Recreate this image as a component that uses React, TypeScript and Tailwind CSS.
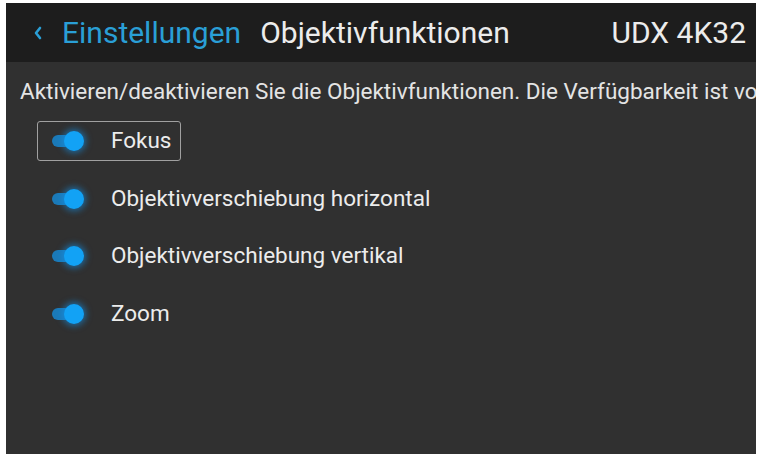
import React from 'react';

interface ToggleRowProps {
  label: string;
  focused?: boolean;
}

const Toggle: React.FC = () => (
  <div className="relative h-[22px] w-[36px]">
    <div className="absolute left-[2px] top-[5px] h-[12px] w-[28px] rounded-full bg-[#1b7ab8]" />
    <div className="absolute left-[14px] top-[1px] h-[20px] w-[20px] rounded-full bg-[#12a2f5] shadow-[0_0_6px_2px_rgba(18,150,240,0.55)]" />
  </div>
);

const ToggleRow: React.FC<ToggleRowProps> = ({ label, focused }) => (
  <div className="flex h-[57.7px] items-center">
    <div
      className={
        focused
          ? 'ml-[31px] flex h-[40px] items-center gap-[25px] rounded-[3px] border border-[#a0a0a0] pl-[12px] pr-[9px]'
          : 'ml-[31px] flex h-[40px] items-center gap-[25px] border border-transparent pl-[12px] pr-[9px]'
      }
    >
      <Toggle />
      <span className="text-[22.5px] text-[#ececec]">{label}</span>
    </div>
  </div>
);

export default function App() {
  const rows = [
    { label: 'Fokus', focused: true },
    { label: 'Objektivverschiebung horizontal' },
    { label: 'Objektivverschiebung vertikal' },
    { label: 'Zoom' },
  ];

  return (
    <div className="h-[454px] w-[762px] bg-white pl-[6px] pr-[6px] pt-[3px] font-['Roboto',sans-serif]">
      <div className="flex h-full flex-col overflow-hidden bg-[#303030]">
        {/* Header */}
        <div className="flex h-[59px] shrink-0 items-center bg-[#1d1d1d] pl-[27px] pr-[10px]">
          <svg width="10" height="14" viewBox="0 0 10 14" className="mr-[19px]">
            <path d="M7 2 L3 7 L7 12" fill="none" stroke="#2a9fd6" strokeWidth="2.6" strokeLinecap="round" strokeLinejoin="round" />
          </svg>
          <span className="text-[30px] leading-[36px] text-[#2a9fd6]">Einstellungen</span>
          <span className="ml-[19px] text-[30px] leading-[36px] text-[#ececec]">Objektivfunktionen</span>
          <span className="ml-auto text-[30px] leading-[36px] text-[#ececec]">UDX 4K32</span>
        </div>

        {/* Description */}
        <div className="mt-[16px] whitespace-nowrap pl-[14px] text-[22.5px] leading-[26px] text-[#e4e4e4]">
          Aktivieren/deaktivieren Sie die Objektivfunktionen. Die Verfügbarkeit ist von der Objektivbestückung abhängig.
        </div>

        {/* Toggle list */}
        <div className="mt-[8px] flex flex-col">
          {rows.map((row) => (
            <ToggleRow key={row.label} label={row.label} focused={row.focused} />
          ))}
        </div>
      </div>
    </div>
  );
}
